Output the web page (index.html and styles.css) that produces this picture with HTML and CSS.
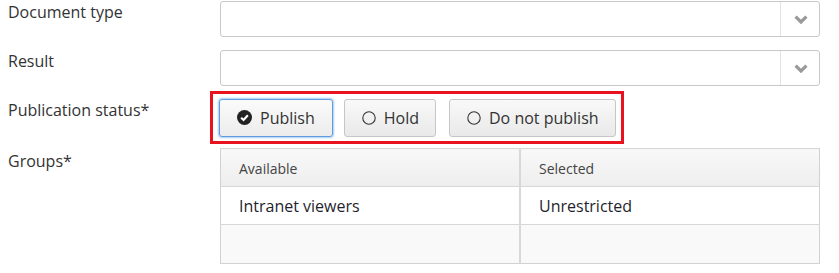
FILE: index.html
```html
<!DOCTYPE html>
<html>
<head>
  <meta charset="utf-8">
  <title>Publication</title>
  <link rel="stylesheet" href="styles.css">
</head>
<body>
  <form class="form">
    <div class="row">
      <label class="label">Document type</label>
      <div class="select">
        <span class="select-value"></span>
        <span class="select-arrow">
          <svg width="14" height="9" viewBox="0 0 14 9"><path d="M1.6 1.6 L7 7 L12.4 1.6" fill="none" stroke="#999" stroke-width="3.2"/></svg>
        </span>
      </div>
    </div>

    <div class="row">
      <label class="label">Result</label>
      <div class="select">
        <span class="select-value"></span>
        <span class="select-arrow">
          <svg width="14" height="9" viewBox="0 0 14 9"><path d="M1.6 1.6 L7 7 L12.4 1.6" fill="none" stroke="#999" stroke-width="3.2"/></svg>
        </span>
      </div>
    </div>

    <div class="row row-status">
      <label class="label">Publication status*</label>
      <div class="highlight">
        <button type="button" class="btn btn-active">
          <svg class="ico" width="15" height="15" viewBox="0 0 16 16"><circle cx="8" cy="8" r="8" fill="#222"/><path d="M4.4 8.2 L7 10.7 L11.6 5.6" fill="none" stroke="#fff" stroke-width="2.2"/></svg>
          Publish
        </button>
        <button type="button" class="btn">
          <svg class="ico" width="14" height="14" viewBox="0 0 14 14"><circle cx="7" cy="7" r="6.2" fill="none" stroke="#333" stroke-width="1.1"/></svg>
          Hold
        </button>
        <button type="button" class="btn">
          <svg class="ico" width="14" height="14" viewBox="0 0 14 14"><circle cx="7" cy="7" r="6.2" fill="none" stroke="#333" stroke-width="1.1"/></svg>
          Do not publish
        </button>
      </div>
    </div>

    <div class="row">
      <label class="label">Groups*</label>
      <table class="groups">
        <tr class="head">
          <th>Available</th>
          <th>Selected</th>
        </tr>
        <tr>
          <td>Intranet viewers</td>
          <td>Unrestricted</td>
        </tr>
        <tr class="empty">
          <td></td>
          <td></td>
        </tr>
      </table>
    </div>
  </form>
</body>
</html>
```

FILE: styles.css
```css
body {
  font-family: "Open Sans", Arial, sans-serif;
  font-size: 16px;
  color: #333;
  margin: 0 8px;
  padding-top: 1px;
  background: #fff;
}

.form {
  display: flex;
  flex-direction: column;
  gap: 13px;
}

.row {
  display: grid;
  grid-template-columns: 212px 600px;
}

.label {
  line-height: 20px;
  padding-top: 1px;
}

.select {
  display: flex;
  height: 36px;
  box-sizing: border-box;
  border: 1px solid #c9c9c9;
  border-radius: 3px;
  background: #fff;
}

.select-value {
  flex: 1;
}

.select-arrow {
  width: 37px;
  border-left: 1px solid #e2e2e2;
  display: flex;
  align-items: center;
  justify-content: center;
  padding-left: 1px;
}

.highlight {
  display: flex;
  justify-self: start;
  margin: -8px 0 -7px -10px;
  padding: 5px 5px 4px 6px;
  border: 3px solid #e8131f;
  gap: 11px;
}

.btn {
  flex: none;
  display: flex;
  align-items: center;
  gap: 8px;
  height: 38px;
  padding: 0 16px 1px 17px;
  font-family: inherit;
  font-size: 16px;
  white-space: nowrap;
  color: #333;
  background: linear-gradient(#f9f9f9, #e9e9e9);
  border: 1px solid #c6c6c6;
  border-radius: 3px;
}

.btn + .btn + .btn {
  margin-left: 2px;
}

.btn-active {
  border-color: #5d9ae0;
  box-shadow: 0 0 2px 1px #a9cdf3;
  background: linear-gradient(#fbfbfb, #ececec);
  padding-right: 17px;
}

.ico {
  flex: none;
}

.groups {
  width: 600px;
  border-collapse: collapse;
  border: 1px solid #d2d2d2;
  margin-top: -2px;
}

.groups th,
.groups td {
  width: 50%;
  height: 38px;
  box-sizing: border-box;
  padding: 0 18px;
  text-align: left;
  border-top: 1px solid #d8d8d8;
}

.groups th + th,
.groups td + td {
  border-left: 2px solid #d8d8d8;
}

.groups .head th {
  font-weight: normal;
  font-size: 14px;
  color: #444;
  background: linear-gradient(#f8f8f8, #eeeeee);
  padding-top: 1px;
}

.groups td {
  color: #1f1f2e;
  font-size: 16px;
}

.groups .empty td {
  background: #f9f9f9;
  height: 39px;
}
```
